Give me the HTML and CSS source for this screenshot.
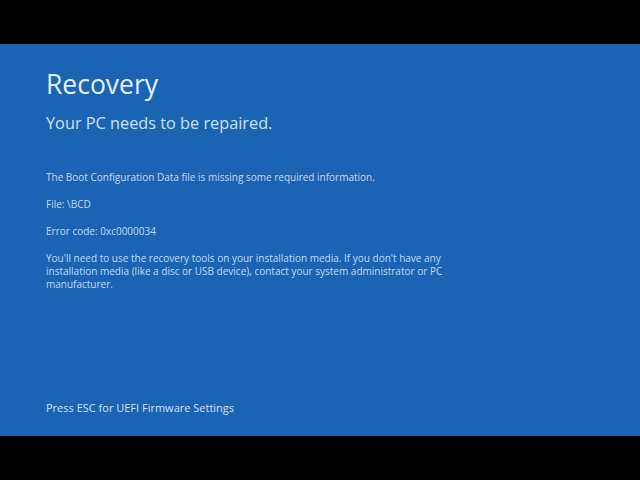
FILE: index.html
```html
<!DOCTYPE html>
<html lang="en">
  <head>
    <meta charset="UTF-8" />
    <meta name="viewport" content="width=device-width, initial-scale=1.0" />
    <title>Recovery</title>
    <link rel="stylesheet" href="styles.css">
  </head>
  <body>
    <div class="screen">
      <h1>Recovery</h1>
      <h2>Your PC needs to be repaired.</h2>
      <div class="details">
        <p>The Boot Configuration Data file is missing some required information.</p>
        <p>File: \BCD</p>
        <p>Error code: 0xc0000034</p>
        <p>You'll need to use the recovery tools on your installation media. If you don't have any<br />installation media (like a disc or USB device), contact your system administrator or PC<br />manufacturer.</p>
      </div>
      <div class="footer">Press ESC for UEFI Firmware Settings</div>
    </div>
  </body>
</html>
```

FILE: styles.css
```css
body {
  margin: 0;
  padding: 44px 0;
  background-color: #000;
  font-family: "Open Sans", "Noto Sans", sans-serif;
}

.screen {
  height: 392px;
  box-sizing: border-box;
  background-color: #1b63b3;
  color: #dce9f7;
  padding: 21px 0 0 46px;
  display: flex;
  flex-direction: column;
}

h1 {
  margin: 0;
  font-size: 26.5px;
  font-weight: 400;
  line-height: 38px;
  color: #e4effa;
}

h2 {
  margin: 8px 0 0;
  font-size: 16.3px;
  font-weight: 400;
  line-height: 24px;
  color: #cfe2f6;
}

.details {
  margin-top: 36px;
  font-size: 10px;
  line-height: 13px;
  color: #c5dbf2;
}

.details p {
  margin: 0 0 14px;
}

.footer {
  margin-top: auto;
  margin-bottom: 21px;
  font-size: 11px;
  color: #cfe2f6;
}
```
